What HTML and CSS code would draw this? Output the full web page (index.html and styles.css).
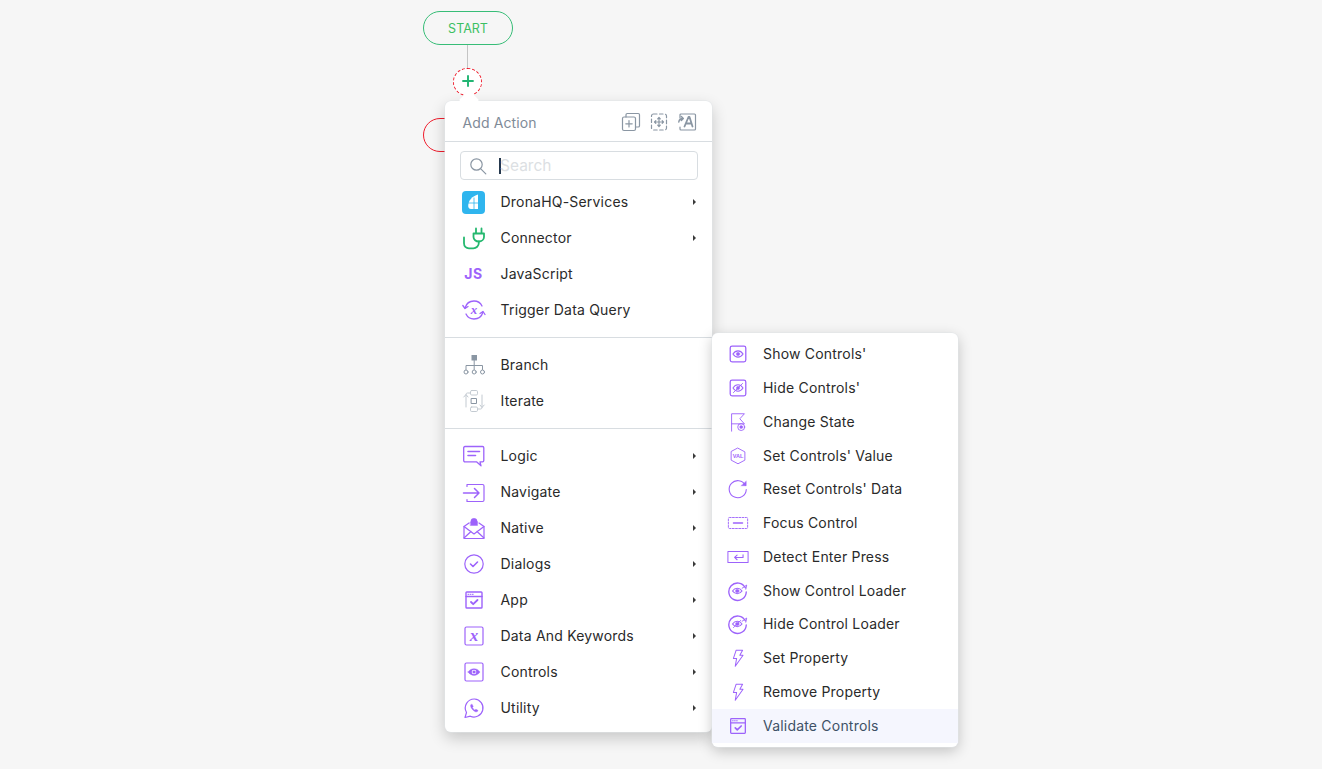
FILE: index.html
```html
<!DOCTYPE html>
<html lang="en">
<head>
<meta charset="utf-8">
<title>Add Action</title>
<link rel="stylesheet" href="styles.css">
</head>
<body>
<svg class="defs" width="0" height="0" aria-hidden="true">
  <defs>
    <symbol id="eyebox" viewBox="0 0 24 24"><rect x="3.500" y="3.500" width="17" height="17" rx="2"/><path d="M6.500 12c3-4.600 8-4.600 11 0-3 4.600-8 4.600-11 0z" stroke-width="1.300"/><circle cx="12" cy="12" r="1.900" class="fillp"/></symbol>
    <symbol id="eyeoff" viewBox="0 0 24 24"><rect x="3.500" y="3.500" width="17" height="17" rx="2"/><path d="M6.500 12c3-4.600 8-4.600 11 0-3 4.600-8 4.600-11 0z" stroke-width="1.100"/><circle cx="12" cy="12" r="1.800" class="fillp"/><path d="M7 17 17 7" stroke-width="1"/></symbol>
    <symbol id="bolt" viewBox="0 0 24 24"><path d="M10 3.500h7l-3 5.500h3.500L9 21l1.500-8.500H7z" stroke-width="1.100"/></symbol>
    <symbol id="appcheck" viewBox="0 0 24 24"><rect x="4" y="4" width="16" height="16" rx=".8"/><path d="M4 8.500h16"/><path d="M6 6.300h.8M8.200 6.300h.8M10.400 6.300h.8" stroke-width="1"/><path d="m9 14 2.200 2.200L15.500 12" stroke-width="1.800"/></symbol>
    <symbol id="loader" viewBox="0 0 24 24"><path d="M20 8.500A9.500 9.500 0 1 0 21 13" stroke-width="1.500"/><path d="M16.500 9l5-3.500-1 4.500" stroke-width="1"/><path d="M6 12c2.800-3.900 7.600-3.900 10.400 0-2.800 3.900-7.600 3.900-10.400 0z" stroke-width="1.200"/><circle cx="11.200" cy="12" r="2" class="fillp"/></symbol>
  </defs>
</svg>

<main class="canvas">
  <div class="node node-start">START</div>
  <div class="link"></div>
  <div class="node node-red"></div>
  <button class="add" type="button"><svg viewBox="0 0 16 16" width="16" height="16"><path d="M8 1.500v13M1.500 8h13"/></svg></button>

  <section class="menu">
    <span class="caret"></span>
    <header class="menu-head">
      <span class="menu-title">Add Action</span>
      <span class="head-tools">
        <svg class="ic-grey" viewBox="0 0 20 20" width="20" height="20"><rect x="1.500" y="5" width="13" height="13.500" rx="1.500"/><path d="M5 5V2.800c0-.7.500-1.300 1.300-1.300h10.900c.7 0 1.300.6 1.300 1.300v10.900c0 .7-.6 1.300-1.300 1.300H14.500"/><path d="M8 8.500v6.500M4.800 11.800h6.400"/></svg>
        <svg class="ic-grey" viewBox="0 0 20 20" width="20" height="20"><rect x="2.500" y="2" width="15" height="16" rx="2" stroke-dasharray="3.500 2.500"/><path d="M10 5.500v9M5.500 10h9M8.700 6.800 10 5.500l1.300 1.300M8.700 13.200l1.300 1.300 1.300-1.300M6.800 8.700 5.500 10l1.300 1.300M13.200 8.700l1.300 1.300-1.300 1.300"/></svg>
        <svg class="ic-grey" viewBox="0 0 20 20" width="20" height="20"><path d="M4 2h13.500c.6 0 1 .4 1 1v14c0 .6-.4 1-1 1H4c-.6 0-1-.4-1-1v-2M3 6V3c0-.6.400-1 1-1"/><path d="M1.800 10c.4-2.500 2-3.500 4-3.500M4.300 4.500l2 2-2 2" stroke-width="1.500"/><path d="M7.500 14.500 11.500 5h1l3 9.500M9 11.500h5.400" stroke-width="1.800"/></svg>
      </span>
    </header>
    <div class="search">
      <svg class="ic-search" viewBox="0 0 18 18" width="18" height="18"><circle cx="7.500" cy="7.500" r="5.700"/><path d="m11.800 11.800 5 5"/></svg>
      <span class="cursor"></span>
      <span class="placeholder">Search</span>
    </div>

    <ul class="group">
      <li class="row"><span class="ico">
        <svg viewBox="0 0 24 24" width="24" height="24" class="plain"><rect x="0" y="1" width="23" height="23" rx="4" fill="#2fb5ee"/><path d="M16 4.500V19H9c-2 0-2.800-1.500-2.800-3C6.200 10.500 10.500 6 16 4.500z" fill="#fff"/><path d="M12 8v11M6.500 13h9.500" stroke="#2fb5ee" stroke-width=".8" fill="none"/></svg>
      </span><span class="label">DronaHQ-Services</span><span class="tri"></span></li>
      <li class="row"><span class="ico">
        <svg viewBox="0 0 24 24" width="24" height="24" class="ic-green"><path d="M14 2.500v5M19.500 2.500v5M11.500 7.500h10.500v3.500c0 2.500-2.300 4.500-5.200 4.500s-5.300-2-5.300-4.500z"/><path d="M16.800 15.500v1.500c0 3-2.500 5.300-5.500 5.300H7c-3 0-5-2.200-5-5V11.500"/></svg>
      </span><span class="label">Connector</span><span class="tri"></span></li>
      <li class="row"><span class="ico"><span class="js">JS</span></span><span class="label">JavaScript</span></li>
      <li class="row"><span class="ico">
        <svg viewBox="0 0 24 24" width="24" height="24"><path d="M3 10C4.300 5.500 8 3 12 3c3.500 0 6.500 1.800 8 5M21 14c-1.300 4.500-5 7-9 7-3.500 0-6.500-1.800-8-5" stroke-width="1.300"/><path d="M.8 7.500 3 10.500l3-2M23 16.500 21 13.500l-3 2" stroke-width="1.300"/><text x="12" y="16" class="ix">x</text></svg>
      </span><span class="label">Trigger Data Query</span></li>
    </ul>
    <hr class="sep">
    <ul class="group">
      <li class="row"><span class="ico">
        <svg viewBox="0 0 24 24" width="24" height="24" class="ic-slate"><rect x="9.500" y="2" width="5.500" height="5.500" fill="#8a96a3" stroke="none"/><path d="M12.200 7.500v9M4 16.500V12.500h16.500v4"/><circle cx="4" cy="19" r="2"/><circle cx="12.200" cy="19" r="2"/><circle cx="20.500" cy="19" r="2"/></svg>
      </span><span class="label">Branch</span></li>
      <li class="row"><span class="ico">
        <svg viewBox="0 0 24 24" width="24" height="24" class="ic-pale"><rect x="8.500" y="1.500" width="7" height="4.500" rx="1.200"/><rect x="8.500" y="18" width="7" height="4.500" rx="1.200"/><rect x="9.500" y="9.500" width="5" height="5" stroke="#8a96a3"/><path d="M8.500 4H5.500C4.500 4 4 4.800 4 5.500V18M1.800 8 4 5.500 6 8M15.500 20H18.500c1 0 1.500-.8 1.500-1.500V6M18 16l2 2.500 2.200-2.500"/></svg>
      </span><span class="label">Iterate</span></li>
    </ul>
    <hr class="sep">
    <ul class="group">
      <li class="row"><span class="ico">
        <svg viewBox="0 0 24 24" width="24" height="24"><path d="M3 2.500h17.500c.8 0 1.300.5 1.300 1.300v12.700c0 .8-.5 1.300-1.300 1.300h-2.500l1 4-4.500-4H3c-.8 0-1.300-.5-1.300-1.300V3.800c0-.8.500-1.300 1.300-1.300z" stroke-width="1.300"/><path d="M6 7.500h11.500M6 11.500h7.500" stroke-width="1.600"/></svg>
      </span><span class="label">Logic</span><span class="tri"></span></li>
      <li class="row"><span class="ico">
        <svg viewBox="0 0 24 24" width="24" height="24"><path d="M5 6.500V4.500h15.500c.8 0 1.500.7 1.500 1.500v14c0 .8-.7 1.500-1.500 1.500H5v-2" stroke-width="1.200"/><path d="M1.500 13h15.500M12.500 8.500l4.500 4.500-4.500 4.500" stroke-width="1.500"/></svg>
      </span><span class="label">Navigate</span><span class="tri"></span></li>
      <li class="row"><span class="ico">
        <svg viewBox="0 0 24 24" width="24" height="24"><path d="M7 7 2 10.500V22c0 .3.200.5.500.5h19c.3 0 .5-.2.500-.5V10.500L17 7" stroke-width="1.200"/><path d="M2 10.500l10 7.500 10-7.500M2 22l7-6.500M22 22l-7-6.500" stroke-width="1.200"/><circle cx="12" cy="5.500" r="3.200" class="fillp"/><rect x="8.500" y="6" width="7" height="3.500" class="fillp"/></svg>
      </span><span class="label">Native</span><span class="tri"></span></li>
      <li class="row"><span class="ico">
        <svg viewBox="0 0 24 24" width="24" height="24"><circle cx="12" cy="12" r="9.200" stroke-width="1.200"/><path d="m8.500 12 2.500 2.500 4.500-4.500" stroke-width="1.600"/></svg>
      </span><span class="label">Dialogs</span><span class="tri"></span></li>
      <li class="row"><span class="ico">
        <svg viewBox="0 0 24 24" width="24" height="24"><use href="#appcheck"/></svg>
      </span><span class="label">App</span><span class="tri"></span></li>
      <li class="row"><span class="ico">
        <svg viewBox="0 0 24 24" width="24" height="24"><rect x="3" y="3" width="18" height="18" rx="1.500" stroke-width="1.200"/><text x="12" y="16.500" class="ix ix-big">x</text></svg>
      </span><span class="label">Data And Keywords</span><span class="tri"></span></li>
      <li class="row"><span class="ico">
        <svg viewBox="0 0 24 24" width="24" height="24"><rect x="3" y="3" width="18" height="18" rx="1.500" stroke-width="1.200"/><path d="M6 12c3-4.500 9-4.500 12 0-3 4.500-9 4.500-12 0z" class="fillp"/><circle cx="12" cy="12" r="2.300" fill="#fff" stroke="none"/><circle cx="12" cy="12" r="1.300" class="fillp"/></svg>
      </span><span class="label">Controls</span><span class="tri"></span></li>
      <li class="row"><span class="ico">
        <svg viewBox="0 0 24 24" width="24" height="24"><path d="M12.500 3a9 9 0 0 0-8 13.500L3 21.500l5.300-1.300A9 9 0 1 0 12.500 3z" stroke-width="1.200"/><path d="M9 8.500c-.8.800-.5 2.500 1 4.500s3.300 3 4.700 2.800c.8-.1 1.300-.7 1.200-1.500l-2-1-1 .8c-1-.4-2-1.600-2.500-2.600l.8-1-1-2z" class="fillp"/></svg>
      </span><span class="label">Utility</span><span class="tri"></span></li>
    </ul>
  </section>

  <section class="submenu">
    <ul class="group">
      <li class="sub"><span class="sico"><svg viewBox="0 0 24 24" width="22" height="22"><use href="#eyebox"/></svg></span><span class="label">Show Controls'</span></li>
      <li class="sub"><span class="sico"><svg viewBox="0 0 24 24" width="22" height="22"><use href="#eyeoff"/></svg></span><span class="label">Hide Controls'</span></li>
      <li class="sub"><span class="sico"><svg viewBox="0 0 24 24" width="22" height="22"><path d="M5 22V3h14l-5 5.500 5 5.500H5" stroke-width="1"/><circle cx="15.500" cy="17.500" r="3.800" stroke-width="1"/><circle cx="15.500" cy="17.500" r="1.700" class="fillp"/></svg></span><span class="label">Change State</span></li>
      <li class="sub"><span class="sico"><svg viewBox="0 0 24 24" width="22" height="22"><path d="M12 3.500 19.500 7.500v9L12 20.500 4.500 16.500v-9z" stroke-width="1"/><text x="12" y="14" class="ival">VAL</text></svg></span><span class="label">Set Controls' Value</span></li>
      <li class="sub"><span class="sico"><svg viewBox="0 0 24 24" width="22" height="22"><path d="M20 8a9.300 9.300 0 1 0 1 4.500" stroke-width="1.200"/><path d="M15.500 8.500h5.500V3.500z" class="fillp"/></svg></span><span class="label">Reset Controls' Data</span></li>
      <li class="sub"><span class="sico"><svg viewBox="0 0 24 24" width="22" height="22"><rect x="1.500" y="6" width="21" height="12" rx="1" stroke-width="1" stroke-dasharray="2 1.500"/><path d="M7 12h10" stroke-width="1.400"/></svg></span><span class="label">Focus Control</span></li>
      <li class="sub"><span class="sico"><svg viewBox="0 0 24 24" width="22" height="22"><rect x="1" y="6" width="22" height="12" stroke-width="1.100"/><path d="M17.500 9.500v3h-9M11 10l-2.700 2.500L11 15" stroke-width="1.200"/></svg></span><span class="label">Detect Enter Press</span></li>
      <li class="sub"><span class="sico"><svg viewBox="0 0 24 24" width="22" height="22"><use href="#loader"/></svg></span><span class="label">Show Control Loader</span></li>
      <li class="sub"><span class="sico"><svg viewBox="0 0 24 24" width="22" height="22"><use href="#loader"/><path d="M7 16l8-8" stroke-width=".9"/></svg></span><span class="label">Hide Control Loader</span></li>
      <li class="sub"><span class="sico"><svg viewBox="0 0 24 24" width="22" height="22"><use href="#bolt"/></svg></span><span class="label">Set Property</span></li>
      <li class="sub"><span class="sico"><svg viewBox="0 0 24 24" width="22" height="22"><use href="#bolt"/></svg></span><span class="label">Remove Property</span></li>
      <li class="sub sub-active"><span class="sico"><svg viewBox="0 0 24 24" width="22" height="22"><use href="#appcheck"/></svg></span><span class="label">Validate Controls</span></li>
    </ul>
  </section>
</main>
</body>
</html>
```

FILE: styles.css
```css
* { box-sizing: border-box; }
html, body { margin: 0; height: 100%; overflow: hidden; }
body {
  background: #f6f6f6;
  font-family: "Inter", "Open Sans", sans-serif;
  font-size: 14px;
  color: #2a2a2a;
}
.defs { position: absolute; }
.canvas { position: relative; width: 1322px; height: 769px; overflow: hidden; }

svg { display: block; fill: none; stroke: #9d63fb; stroke-width: 1.400; stroke-linecap: round; stroke-linejoin: round; overflow: visible; }
.fillp { fill: #9d63fb; stroke: #9d63fb; stroke-width: .4; }
.plain { stroke: none; }

.node {
  position: absolute;
  left: 423px;
  width: 90px;
  height: 34px;
  border-radius: 17px;
  display: flex;
  align-items: center;
  justify-content: center;
  background: #f6f6f6;
}
.node-start { top: 11px; border: 1px solid #37bd77; color: #3cc063; font-size: 12.500px; }
.node-red { top: 118px; border: 1px solid #f01c2c; }
.link { position: absolute; left: 467px; top: 45px; width: 1px; height: 24px; background: #c4c4c4; }
.add {
  position: absolute;
  left: 453px;
  top: 68px;
  width: 29px;
  height: 28px;
  padding: 0 0 2px;
  border-radius: 50%;
  border: 1.500px dashed #f01c2c;
  background: #fff;
  display: flex;
  align-items: center;
  justify-content: center;
}
.add svg { stroke: #22b573; stroke-width: 2.200; stroke-linecap: butt; width: 14px; height: 14px; }

.menu {
  position: absolute;
  left: 445px;
  top: 101px;
  width: 266.500px;
  height: 630.500px;
  background: #fff;
  border-radius: 6px;
  box-shadow: 0 0 0 .5px #e2e5e8, 0 6px 16px rgba(0, 0, 0, .2);
}
.caret {
  position: absolute;
  left: 17px;
  top: -8px;
  width: 14px;
  height: 14px;
  background: #fff;
  transform: rotate(45deg);
}
.menu-head {
  position: relative;
  height: 41px;
  padding: 2px 15px 0 17.500px;
  display: flex;
  align-items: center;
  justify-content: space-between;
  border-bottom: 1px solid #d8dde1;
}
.menu-title { color: #7f8b98; font-size: 14px; letter-spacing: .1px; }
.head-tools { display: flex; gap: 8px; }
.ic-grey { stroke: #8a96a3; stroke-width: 1.200; }

.search {
  margin: 9px 14px 4px 15px;
  height: 29px;
  border: 1px solid #d8dde1;
  border-radius: 4px;
  display: flex;
  align-items: center;
  padding-left: 8px;
}
.ic-search { stroke: #8a96a3; stroke-width: 1.200; }
.cursor { width: 2px; height: 16px; background: #25384d; margin-left: 12px; }
.placeholder { color: #dcdfe3; font-size: 15.500px; margin-left: -1px; padding-bottom: 1px; }

.group { list-style: none; margin: 0; padding: 0; }
.row {
  height: 36px;
  display: flex;
  align-items: center;
  padding: 0 16px 0 16px;
}
.row .label { padding-bottom: 2px; }
.ico { width: 25px; height: 24px; display: flex; align-items: center; justify-content: center; flex: none; margin-right: 14.500px; }
.label { flex: 1; white-space: nowrap; letter-spacing: .2px; }
.sub .label { padding-bottom: 1px; }
.tri {
  width: 0;
  height: 0;
  border-left: 3px solid #3a3a3a;
  border-top: 3px solid transparent;
  border-bottom: 3px solid transparent;
}
.sep { border: 0; border-top: 1px solid #d8dde1; margin: 9px 0; }
.ic-green { stroke: #25b86f; stroke-width: 1.800; }
.ic-slate { stroke: #8a96a3; stroke-width: 1; }
.ic-pale { stroke: #c3cad1; stroke-width: 1; }
.js { color: #9d63fb; font-weight: 700; font-size: 14px; letter-spacing: .5px; padding-bottom: 2px; }
.ix { font-family: "Liberation Serif", serif; font-style: italic; font-weight: 700; font-size: 13px; fill: #9d63fb; stroke: none; text-anchor: middle; }
.ix-big { font-size: 17px; }
.ival { font-family: "Liberation Sans", sans-serif; font-size: 6px; font-weight: 700; fill: #9d63fb; stroke: none; text-anchor: middle; }

.submenu {
  position: absolute;
  left: 712px;
  top: 333px;
  width: 246px;
  height: 414px;
  padding: 4.500px 0;
  background: #fff;
  border-radius: 6px;
  box-shadow: 0 0 0 .5px #e2e5e8, 0 4px 14px rgba(0, 0, 0, .22);
}
.sub { height: 33.750px; display: flex; align-items: center; padding-left: 15px; }
.sico { width: 22px; height: 22px; flex: none; margin-right: 14px; }
.sub-active { background: #f5f6fe; color: #3e5166; }
```
